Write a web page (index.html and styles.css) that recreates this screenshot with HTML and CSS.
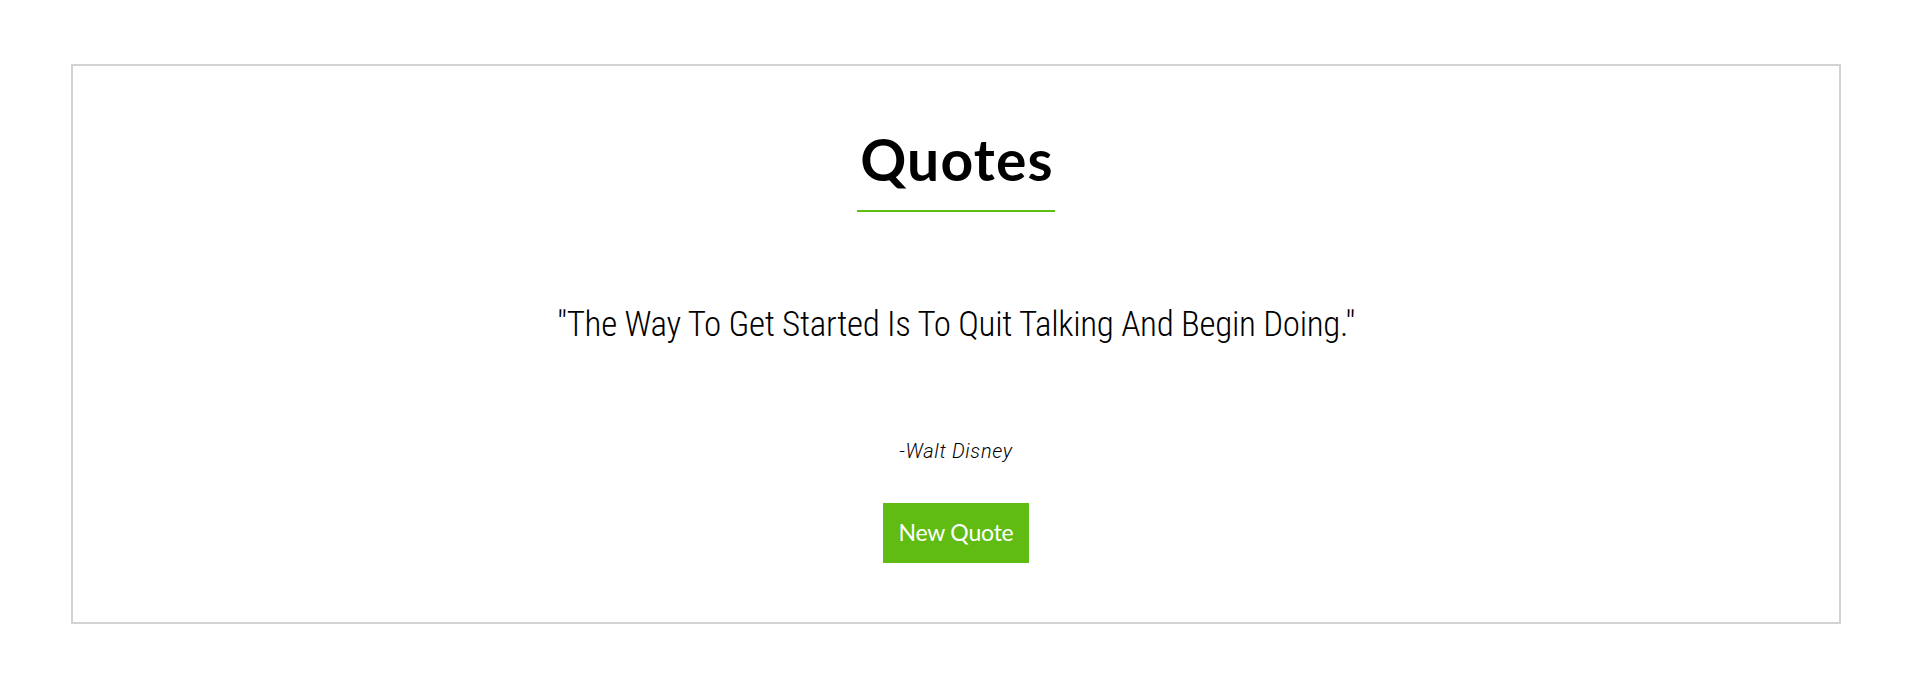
FILE: index.html
```html
<!DOCTYPE html>
<html lang="en">
<head>
<meta charset="utf-8">
<title>Quotes</title>
<link rel="stylesheet" href="styles.css">
</head>
<body>
  <main class="quote-box">
    <h1 class="title">Quotes</h1>
    <p class="quote-text">"The Way To Get Started Is To Quit Talking And Begin Doing."</p>
    <p class="quote-author">-Walt Disney</p>
    <button class="new-quote" type="button">New Quote</button>
  </main>
</body>
</html>
```
FILE: styles.css
```css
html, body {
  margin: 0;
  padding: 0;
  background: #ffffff;
}

body {
  padding-top: 64px;
}

.quote-box {
  box-sizing: border-box;
  width: 1770px;
  margin: 0 0 0 71px;
  border: 2px solid #d2d2d2;
  display: flex;
  flex-direction: column;
  align-items: center;
  padding: 59px 0 59px;
}

.title {
  margin: 0;
  font-family: Lato, "Liberation Sans", sans-serif;
  font-weight: 700;
  font-size: 57px;
  line-height: 68px;
  letter-spacing: 1.2px;
  color: #000000;
  padding: 0 1px 17px 3px;
  border-bottom: 2px solid #5fbd13;
}

.quote-text {
  margin: 92px 0 0;
  font-family: "Roboto Condensed", Roboto, "Liberation Sans", sans-serif;
  font-weight: 300;
  font-size: 35px;
  line-height: 42px;
  letter-spacing: -0.3px;
  color: #000000;
}

.quote-author {
  margin: 94px 0 0;
  font-family: Roboto, "Liberation Sans", sans-serif;
  font-weight: 300;
  font-style: italic;
  font-size: 20px;
  line-height: 23px;
  letter-spacing: 0.7px;
  color: #000000;
}

.new-quote {
  box-sizing: border-box;
  margin-top: 40px;
  width: 146px;
  height: 60px;
  border: none;
  padding: 0 0 2px;
  background: #60bc12;
  color: #ffffff;
  font-family: Lato, "Liberation Sans", sans-serif;
  font-weight: 400;
  font-size: 23px;
  line-height: 28px;
  letter-spacing: -0.2px;
}
```
